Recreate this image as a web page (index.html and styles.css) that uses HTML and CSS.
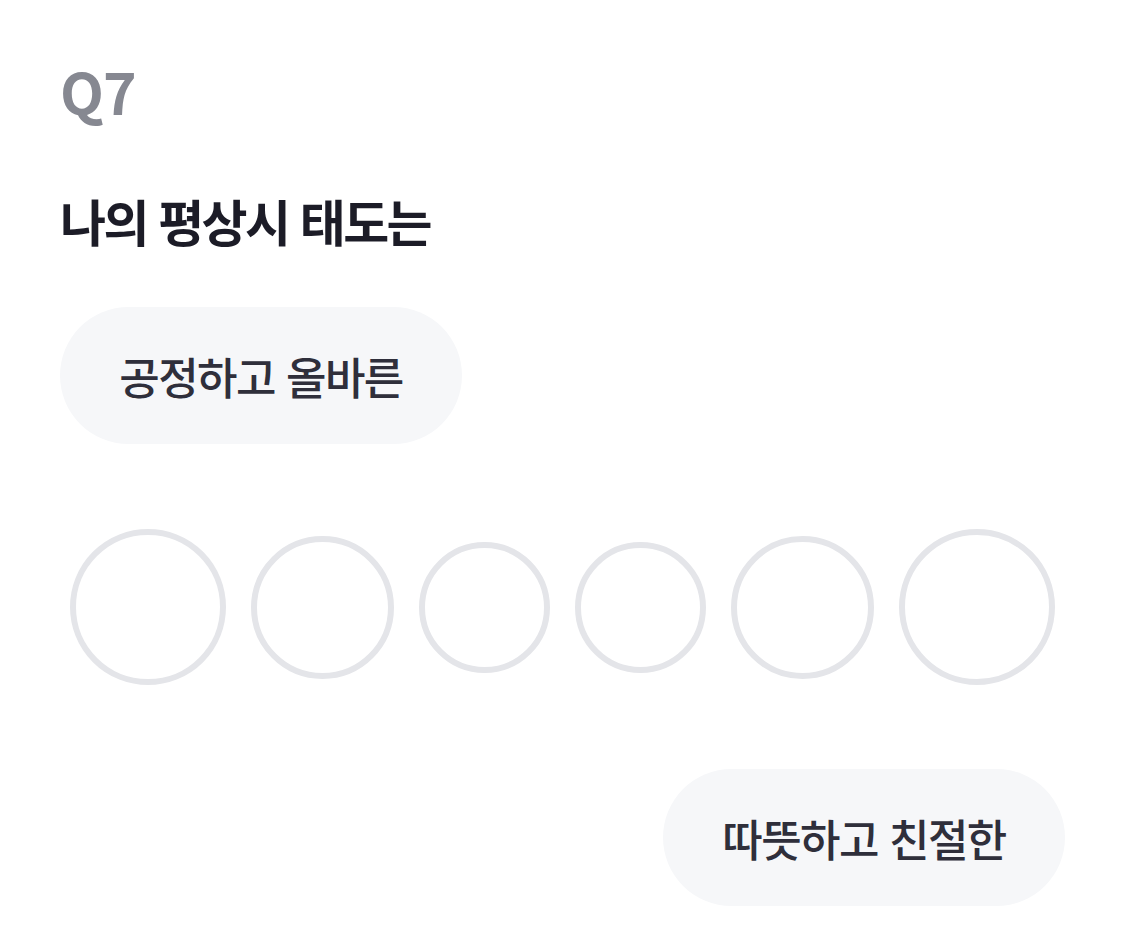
FILE: index.html
```html
<!DOCTYPE html>
<html lang="ko">
<head>
<meta charset="utf-8">
<link rel="stylesheet" href="styles.css">
</head>
<body>
<main class="page">
  <div class="qnum">Q7</div>
  <h1 class="question">나의 평상시 태도는</h1>
  <div class="option-row start">
    <div class="pill">공정하고 올바른</div>
  </div>
  <div class="scale">
    <span class="dot d1"></span>
    <span class="dot d2"></span>
    <span class="dot d3"></span>
    <span class="dot d3"></span>
    <span class="dot d2"></span>
    <span class="dot d1"></span>
  </div>
  <div class="option-row end">
    <div class="pill">따뜻하고 친절한</div>
  </div>
</main>
</body>
</html>
```
FILE: styles.css
```css
html, body {
  margin: 0;
  padding: 0;
  background: #ffffff;
}
body {
  font-family: "Noto Sans CJK KR", "Noto Sans", sans-serif;
}
.page {
  padding: 54px 60px 0 60px;
  width: 1005px;
}
.qnum {
  font-size: 57px;
  line-height: 72px;
  font-weight: 700;
  color: #868891;
  letter-spacing: -1px;
}
.question {
  margin: 59px 0 0 0;
  font-size: 50px;
  line-height: 70px;
  font-weight: 700;
  color: #1c1c27;
  letter-spacing: -2.6px;
}
.option-row {
  display: flex;
  margin-top: 52px;
}
.option-row.start { justify-content: flex-start; }
.option-row.end { justify-content: flex-end; margin-top: 84px; }
.pill {
  height: 137px;
  width: 402px;
  box-sizing: border-box;
  border-radius: 69px;
  background: #f6f7f9;
  display: flex;
  align-items: center;
  justify-content: center;
  font-size: 44px;
  font-weight: 500;
  color: #2f2f3b;
  letter-spacing: -1.5px;
}
.scale {
  display: flex;
  justify-content: center;
  align-items: center;
  gap: 25px;
  margin-top: 85px;
  height: 156px;
}
.dot {
  display: block;
  box-sizing: border-box;
  border: 6px solid #e4e5e9;
  border-radius: 50%;
  background: #ffffff;
}
.d1 { width: 156px; height: 156px; }
.d2 { width: 143px; height: 143px; }
.d3 { width: 131px; height: 131px; }
```
